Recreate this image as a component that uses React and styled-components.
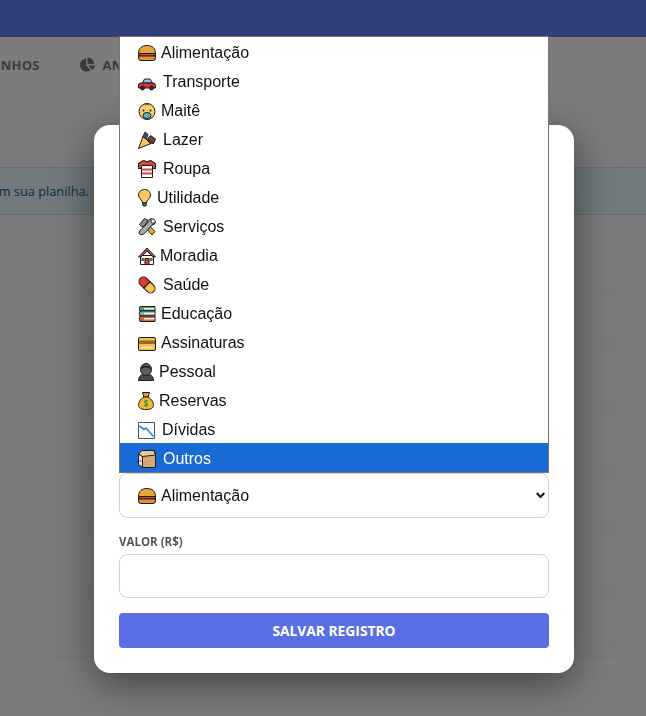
import React from 'react';
import styled, { createGlobalStyle } from 'styled-components';
import { FaChartPie, FaCoins } from 'react-icons/fa';

const GlobalStyle = createGlobalStyle`
  html, body { margin: 0; padding: 0; height: 716px; overflow: hidden; background: #f8f9fa; }
  * { box-sizing: border-box; }
`;

const Page = styled.div` width: 646px; height: 716px; overflow: hidden; font-family: "Open Sans", "Noto Sans", sans-serif; `;
const Header = styled.header` height: 37px; background: #5f7bf0; `;
const Nav = styled.nav` height: 55px; margin-left: -41px; padding-top: 1px; display: flex; align-items: center; gap: 40px; border-bottom: 1px solid #eee; `;
const NavItem = styled.a` display: flex; align-items: center; gap: 8px; font-size: 13px; font-weight: 700; letter-spacing: 0.2px; color: #777; white-space: nowrap; svg { font-size: 15px; } `;
const Banner = styled.div` height: 48px; margin: 75px 0 0 -300px; display: flex; align-items: center; background: #e3f4fa; border-top: 1px solid #bfe3ee; border-bottom: 1px solid #bfe3ee; font-size: 12.800px; color: #0c5f8a; `;
const BannerText = styled.span` width: 389px; display: flex; justify-content: flex-end; white-space: nowrap; `;
const Rows = styled.div` margin-top: 75px; display: flex; flex-direction: column; gap: 8px; `;
const Row = styled.div` height: 53px; border-top: 1px solid #eee; border-bottom: 1px solid #eee; `;

const Overlay = styled.div` position: fixed; inset: 0; padding: 125px 0 0 94px; background: rgba(0, 0, 0, 0.5); `;
const Modal = styled.div` position: relative; width: 480px; height: 548px; padding: 25px; display: flex; flex-direction: column; justify-content: flex-end; background: #fff; border-radius: 16px; box-shadow: 0 10px 40px rgba(0, 0, 0, 0.5); `;
const Field = styled.div` display: flex; flex-direction: column; margin-bottom: ${p => p.$gap}px; `;
const Label = styled.label` height: 20px; font-size: 11.500px; font-weight: 700; color: #555; `;
const Input = styled.input` width: 430px; height: 44px; border: 1px solid #ced4da; border-radius: 8px; background: #fff; outline: none; `;
const Select = styled.div` width: 430px; height: 45px; padding: 0 3px 0 18px; display: flex; align-items: center; border: 1px solid #ced4da; border-radius: 8px; font: 16px "Liberation Sans", Arial, sans-serif; color: #111; `;
const Grow = styled.span` flex: 1; `;
const Save = styled.button` width: 430px; height: 35px; padding: 0; border: none; border-radius: 4px; background: #5a6fe6; color: #fff; font-family: inherit; font-size: 13.800px; font-weight: 700; `;

const List = styled.ul` position: absolute; top: -89px; left: 25px; width: 430px; height: 437px; margin: 0; padding: 0; list-style: none; background: #fff; border: 1px solid #767676; font: 16px "Liberation Sans", Arial, sans-serif; color: #111; `;
const Option = styled.li` height: 29px; padding: 2px 0 0 18px; display: flex; align-items: center; background: ${p => (p.$active ? '#1a6ad6' : 'transparent')}; color: ${p => (p.$active ? '#fff' : '#111')}; `;
const Slot = styled.span` width: ${p => p.$w}px; margin-right: 4px; display: flex; flex: none; svg { flex: none; display: block; } `;

const Emoji = ({ children }) => (
  <svg width="18" height="18" viewBox="0 0 18 18" stroke="#1c1c1c" strokeWidth="1" strokeLinejoin="round">{children}</svg>
);

const Burger = () => (
  <Emoji>
    <path d="M.5 9.500C.5 4 4 1.500 9 1.500S17.500 4 17.500 9.500Z" fill="#eaa53a" />
    <path d="M.5 9.500H17.500V12H.5Z" fill="#a4542b" />
    <path d="M.5 12H17.500V14Q17.500 16.500 15 16.500H3Q.5 16.500 .5 14Z" fill="#e0932f" />
    <path d="M3 10.700H15" stroke="#e0453a" />
  </Emoji>
);
const Car = () => (
  <Emoji>
    <path d="M4.500 10L6.500 6H12L14.500 10Z" fill="#8fc7e8" />
    <path d="M.5 15V12Q.5 10 3 10H15Q17.500 10 17.500 12.500V15Z" fill="#d5382f" />
    <circle cx="4.500" cy="15" r="2" fill="#333" />
    <circle cx="13.500" cy="15" r="2" fill="#333" />
  </Emoji>
);
const Baby = () => (
  <Emoji>
    <circle cx="9" cy="9.500" r="8" fill="#fbcc6a" />
    <path d="M7.500 3Q9 .5 10.500 3" fill="none" />
    <circle cx="5.500" cy="8.500" r="1" fill="#1c1c1c" stroke="none" />
    <circle cx="12.500" cy="8.500" r="1" fill="#1c1c1c" stroke="none" />
    <ellipse cx="9" cy="13.500" rx="4" ry="3" fill="#4fbcc0" />
  </Emoji>
);
const Party = () => (
  <Emoji>
    <path d="M.5 17.500L5 5.500L13 12.500Z" fill="#f6c65a" />
    <path d="M5 6L7 1L10 3.500L8.500 7.500Z" fill="#2f5674" />
    <path d="M9.500 8L12.500 4.500L17.500 8L15.500 12.500L11.500 12Z" fill="#6d3526" />
    <path d="M12.500 7L15 9.500" stroke="#d4584e" />
  </Emoji>
);
const Shirt = () => (
  <Emoji>
    <path d="M5.500 .5L.5 3.500V8.500H3.500V17.500H14.500V8.500H17.500V3.500L12.500 .5Q9 3.500 5.500 .5Z" fill="#fff" />
    <path d="M5.500 .5L.5 3.500V8.500H3.500V5.500H14.500V8.500H17.500V3.500L12.500 .5Q9 3.500 5.500 .5Z" fill="#dd4436" />
    <path d="M4 8.500H14V10.500H4ZM4 12.500H14V14.500H4Z" fill="#dd4436" stroke="none" />
  </Emoji>
);
const Bulb = () => (
  <Emoji>
    <path d="M6.500 .5C3 .5 .5 3 .5 6C.5 9.500 4.300 11 4.800 14H8.200C8.700 11 12.500 9.500 12.500 6C12.500 3 10 .5 6.500 .5Z" fill="#fbc866" />
    <path d="M4.800 14H8.200V16.500Q6.500 18 4.800 16.500Z" fill="#6a6a6a" />
  </Emoji>
);
const Tools = () => (
  <Emoji>
    <path d="M6 7.500L8.500 5L17 13.500L14 17Z" fill="#eaa53a" />
    <path d="M1.500 6.500L6.500 .5L10.500 2.500L8.500 5L5.500 8.500L3.500 8.500Z" fill="#868b90" />
    <path d="M12 1Q16.500 0 17.500 4Q17 7 14 7L6.500 15.500Q3.500 18 1.500 16Q0 14 2.500 12L10 4.500Q10 2 12 1Z" fill="#a5aaae" />
    <path d="M13 1V4L15 5.500L17.500 3.500" fill="#fff" />
  </Emoji>
);
const House = () => (
  <Emoji>
    <path d="M2.500 8.500H15.500V17.500H2.500Z" fill="#fdf8ee" />
    <path d="M.5 10L9 1L17.500 10H15L9 4L3 10Z" fill="#b9524c" />
    <path d="M7 11.500H11V17.500H7Z" fill="#c9453a" />
    <path d="M3.800 11.500H5.800V13.500H3.800ZM12.200 11.500H14.200V13.500H12.200Z" fill="#63bde6" strokeWidth=".7" />
  </Emoji>
);
const Pill = () => (
  <Emoji>
    <g transform="rotate(45 9 9)">
      <path d="M9 4.500H4A4.500 4.500 0 0 0 4 13.500H9Z" fill="#dc3a33" />
      <path d="M9 4.500H14A4.500 4.500 0 0 1 14 13.500H9Z" fill="#f6c14a" />
    </g>
  </Emoji>
);
const Books = () => (
  <Emoji>
    <path d="M2 1.500H17V6H2Q.5 4 2 1.500Z" fill="#55a060" />
    <path d="M2 6H17V11H2Q.5 8.500 2 6Z" fill="#7fa8c0" />
    <path d="M2 11H17V16.500H2Q.5 14 2 11Z" fill="#d0682f" />
    <path d="M6 3.800H16.500M6 8.500H16.500M6 13.800H16.500" stroke="#f3efe2" strokeWidth="1.500" />
  </Emoji>
);
const Card = () => (
  <Emoji>
    <rect x=".5" y="3.500" width="17" height="13" rx="1.500" fill="#f4c14e" />
    <path d="M1 6.500H17V10H1Z" fill="#9a6a2a" stroke="none" />
    <path d="M3 13.500H15" stroke="#fff0b8" strokeWidth="1.300" />
  </Emoji>
);
const Person = () => (
  <Emoji>
    <path d="M.5 17.500Q.5 12.500 5 11.500H11Q15.500 12.500 15.500 17.500Z" fill="#4a4a4a" />
    <ellipse cx="8" cy="6.500" rx="5.500" ry="6" fill="#5e5e5e" />
    <path d="M3 5.500Q8 1.500 13 5.500" fill="none" stroke="#1c1c1c" strokeWidth="1.400" />
  </Emoji>
);
const Bag = () => (
  <Emoji>
    <path d="M4.500 .5H11.500L10 5H6Z" fill="#e2a22c" />
    <path d="M6 5H10C14 7.500 15.500 10.500 15.500 13.500C15 16.500 12.500 17.500 8 17.500C3.500 17.500 1 16.500 .5 13.500C.5 10.500 2 7.500 6 5Z" fill="#f2b92f" />
    <path d="M10.300 9.300Q8 7.800 6.300 9.300Q5.900 10.800 8 11.200Q10.200 11.700 9.800 13.200Q8 14.600 5.800 13.200M8 7.500V15" fill="none" stroke="#2f8a3a" />
  </Emoji>
);
const Chart = () => (
  <Emoji>
    <rect x=".5" y="1.500" width="16" height="16" fill="#f6fbff" stroke="#555" />
    <path d="M1.500 5L6 8.500L8 7L15.500 15.500" fill="none" stroke="#2e8cd6" strokeWidth="1.600" />
  </Emoji>
);
const Box = () => (
  <Emoji>
    <path d="M.5 4L4 .5H16L17.500 3V17.500H4.500L.5 14.500Z" fill="#d6a878" />
    <path d="M.5 4L4.500 6.500V17.500L.5 14.500Z" fill="#ece6df" />
    <path d="M.5 4L4 .5H16L17.500 5L4.500 6.500Z" fill="#e6c6a2" />
    <circle cx="2.500" cy="11" r="1" fill="#e2574c" stroke="none" />
  </Emoji>
);

const options = [
  ['Alimentação', Burger, 19],
  ['Transporte', Car, 21],
  ['Maitê', Baby, 19],
  ['Lazer', Party, 21],
  ['Roupa', Shirt, 21],
  ['Utilidade', Bulb, 15],
  ['Serviços', Tools, 21],
  ['Moradia', House, 18],
  ['Saúde', Pill, 21],
  ['Educação', Books, 19],
  ['Assinaturas', Card, 19],
  ['Pessoal', Person, 17],
  ['Reservas', Bag, 17],
  ['Dívidas', Chart, 20],
  ['Outros', Box, 21],
];

export default function App() {
  return (
    <Page>
      <GlobalStyle />
      <Header />
      <Nav>
        <NavItem><FaCoins />GANHOS</NavItem>
        <NavItem><FaChartPie />ANÁLISE</NavItem>
      </Nav>
      <Banner><BannerText>Importe e sincronize seus registros com sua planilha.</BannerText></Banner>
      <Rows>
        {[0, 1, 2, 3, 4, 5, 6].map(i => <Row key={i} />)}
      </Rows>
      <Overlay>
        <Modal>
          <List>
            {options.map(([name, Icon, w]) => (
              <Option key={name} $active={name === 'Outros'}>
                <Slot $w={w}><Icon /></Slot>{name}
              </Option>
            ))}
          </List>
          <Field $gap={16}>
            <Select>
              <Slot $w={19}><Burger /></Slot>Alimentação<Grow />
              <svg width="9" height="7" viewBox="0 0 9 7" fill="none" stroke="#111" strokeWidth="2"><path d="M.7 1L4.500 5L8.300 1" /></svg>
            </Select>
          </Field>
          <Field $gap={15}>
            <Label>VALOR (R$)</Label>
            <Input type="text" />
          </Field>
          <Save>SALVAR REGISTRO</Save>
        </Modal>
      </Overlay>
    </Page>
  );
}
